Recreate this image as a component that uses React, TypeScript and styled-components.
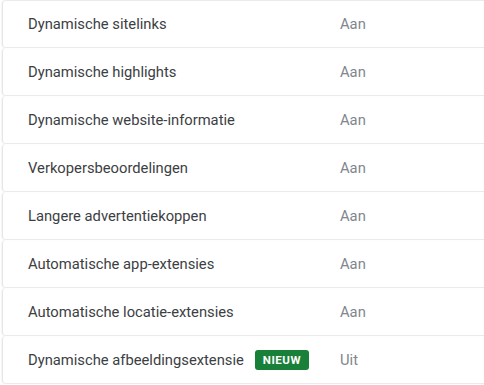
import * as React from 'react'
import styled, { createGlobalStyle } from 'styled-components'

const GlobalStyle = createGlobalStyle`
  body {
    margin: 0;
    background: #ffffff;
    font-family: Roboto, "Liberation Sans", Arial, sans-serif;
  }
`;

interface Extension {
  name: string,
  enabled: boolean,
  isNew?: boolean,
}

const EXTENSIONS: Extension[] = [
  { name: 'Dynamische sitelinks', enabled: true },
  { name: 'Dynamische highlights', enabled: true },
  { name: 'Dynamische website-informatie', enabled: true },
  { name: 'Verkopersbeoordelingen', enabled: true },
  { name: 'Langere advertentiekoppen', enabled: true },
  { name: 'Automatische app-extensies', enabled: true },
  { name: 'Automatische locatie-extensies', enabled: true },
  { name: 'Dynamische afbeeldingsextensie', enabled: false, isNew: true },
];

const List = styled.div`
  width: 490px;
  padding-left: 2px;
`;

const Row = styled.div`
  display: grid;
  grid-template-columns: 337px 1fr;
  align-items: center;
  height: 47px;
  border-bottom: 1px solid #ebebeb;
  border-left: 1px solid #e6e6e6;
  border-radius: 4px 0 0 4px;
  box-shadow: -1px 0 1px rgba(0, 0, 0, 0.04);

  &:first-child {
    border-top: 1px solid #ebebeb;
    height: 46px;
  }
`;

const Label = styled.div`
  display: flex;
  align-items: center;
  gap: 11px;
  padding-left: 25px;
  font-size: 14.75px;
  color: #3c4043;
`;

const Badge = styled.span`
  display: inline-flex;
  align-items: center;
  height: 20px;
  padding: 0 8px;
  border-radius: 3px;
  background: #188038;
  color: #ffffff;
  font-size: 11.5px;
  font-weight: 700;
  letter-spacing: 0.5px;
`;

const Status = styled.div`
  font-size: 14.75px;
  color: #80868b;
`;

const App: React.FC = () => {
  return (
    <List>
      <GlobalStyle />
      {EXTENSIONS.map((ext) => (
        <Row key={ext.name}>
          <Label>
            {ext.name}
            {ext.isNew && <Badge>NIEUW</Badge>}
          </Label>
          <Status>{ext.enabled ? 'Aan' : 'Uit'}</Status>
        </Row>
      ))}
    </List>
  )
}

export default App
